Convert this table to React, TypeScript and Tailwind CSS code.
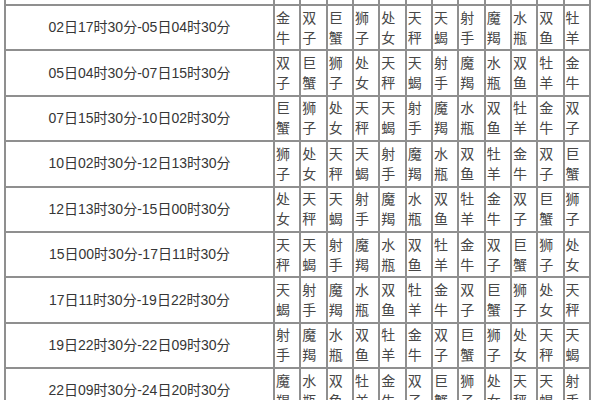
const signs = ['牡羊', '金牛', '双子', '巨蟹', '狮子', '处女', '天秤', '天蝎', '射手', '魔羯', '水瓶', '双鱼']

const ranges = [
  '30日06时30分-02日17时30分',
  '02日17时30分-05日04时30分',
  '05日04时30分-07日15时30分',
  '07日15时30分-10日02时30分',
  '10日02时30分-12日13时30分',
  '12日13时30分-15日00时30分',
  '15日00时30分-17日11时30分',
  '17日11时30分-19日22时30分',
  '19日22时30分-22日09时30分',
  '22日09时30分-24日20时30分',
]

function SignCell({ name }: { name: string }) {
  return (
    <div className="bg-white flex flex-col justify-center pl-[1px] text-[14px] leading-[20px] text-[#474747]">
      <span>{name[0]}</span>
      <span>{name[1]}</span>
    </div>
  )
}

export default function App() {
  return (
    <div
      className="w-[600px] h-[400px] overflow-hidden bg-white"
      style={{ fontFamily: '"Liberation Sans", "Noto Sans CJK SC", sans-serif' }}
    >
      <div className="ml-[4px] -mt-[41.4px] w-fit grid grid-cols-[267px_repeat(12,24.33px)] auto-rows-[43.4px] gap-[2px] p-[2px] bg-[#8f8f8f]">
        {ranges.map((range, row) => (
          <div key={range} className="contents">
            <div className="bg-white flex items-center justify-center text-[14px] text-[#363636]">
              {range}
            </div>
            {signs.map((_, col) => (
              <SignCell key={col} name={signs[(row + col) % 12]} />
            ))}
          </div>
        ))}
      </div>
    </div>
  )
}
